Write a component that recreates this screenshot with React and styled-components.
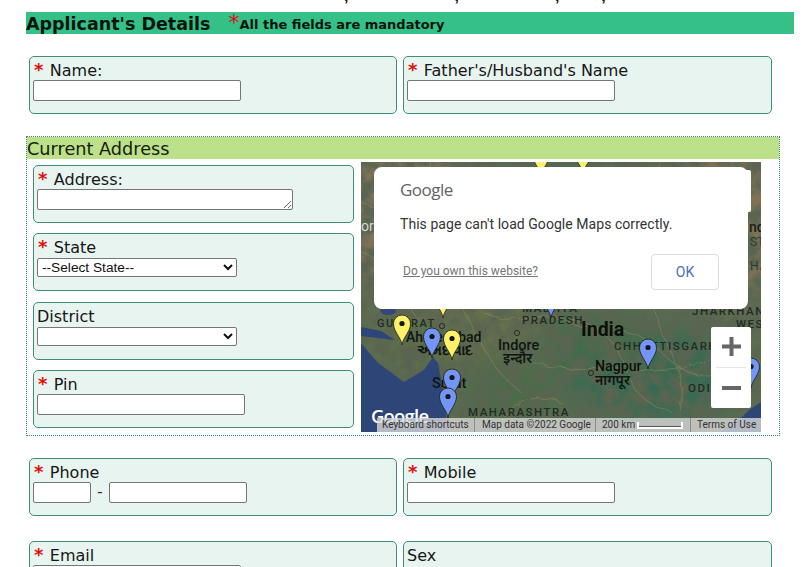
import React from 'react'
import styled, { createGlobalStyle } from 'styled-components'

const Global = createGlobalStyle`
  html, body {
    margin: 0;
    background: #fff;
    overflow: hidden;
  }
  body {
    height: 567px;
    font-family: "DejaVu Sans", Verdana, sans-serif;
    color: #111;
  }
`

const Page = styled.div`
  height: 567px;
  overflow: hidden;
  padding-left: 26px;
  box-sizing: border-box;
`

const CutLine = styled.div`
  height: 12px;
  overflow: hidden;
  display: flex;
  padding-left: 318px;
  font-size: 16px;
  line-height: 16px;
  font-family: "Liberation Sans", sans-serif;
  font-weight: bold;
`

const Comma = styled.span`
  margin-left: ${p => p.$left}px;
  margin-top: -12px;
`

const TitleBar = styled.div`
  box-sizing: border-box;
  width: 768px;
  height: 22px;
  padding-top: 2px;
  background: #35c088;
  display: flex;
  align-items: center;
  font-weight: bold;
  font-size: 17.5px;
  line-height: 20px;
  color: #06140e;
  white-space: nowrap;
`

const TitleStar = styled.span`
  color: #e01010;
  font-weight: normal;
  font-size: 22px;
  margin-left: 18px;
  margin-top: -2px;
`

const TitleNote = styled.span`
  font-size: 13px;
  margin-top: 2px;
`

const Row = styled.div`
  display: grid;
  grid-template-columns: 368px 369px;
  column-gap: 6px;
  margin-left: 3px;
  margin-top: ${p => p.$top}px;
`

const Card = styled.div`
  box-sizing: border-box;
  height: 58px;
  border: 1px solid #3f8f74;
  border-radius: 5px;
  background: #e7f4ef;
  padding: 0 3px;
  font-size: 16px;
`

const Label = styled.div`
  height: 23px;
  line-height: ${p => (p.$plain ? 27 : 25)}px;
  white-space: nowrap;
  color: #161616;
`

const Star = styled.span`
  color: #e01010;
  font-weight: bold;
  font-size: 18px;
  margin-right: 6.4px;
  margin-left: 1px;
`

const TextBox = styled.input`
  box-sizing: border-box;
  display: inline-block;
  width: ${p => p.$w || 208}px;
  height: 21px;
  padding: 0;
  margin: 0;
  border: 1px solid #767676;
  border-radius: 2px;
  background: #fff;
  vertical-align: top;
`

const Dash = styled.span`
  display: inline-block;
  width: 18px;
  text-align: center;
  line-height: 20px;
  vertical-align: top;
  color: #333;
`

const Address = styled.div`
  box-sizing: border-box;
  width: 754px;
  height: 300px;
  margin-top: 22px;
  border: 1px dotted #3a8a6c;
`

const AddressHead = styled.div`
  height: 22px;
  line-height: 24px;
  background: #bde08a;
  font-size: 17.7px;
  color: #14200a;
`

const AddressBody = styled.div`
  display: flex;
  align-items: flex-start;
  padding: 3px 0 0 6px;
  gap: 7px;
`

const Column = styled.div`
  width: 321px;
  margin-top: 3px;
  display: flex;
  flex-direction: column;
  gap: 10.33px;
`

const AreaBox = styled.textarea`
  box-sizing: border-box;
  display: block;
  width: 256px;
  height: 21px;
  margin: 0;
  padding: 0;
  border: 1px solid #767676;
  border-radius: 2px;
  background: #fff;
`

const Dropdown = styled.select`
  display: block;
  box-sizing: border-box;
  width: 200px;
  height: 19px;
  margin: 1px 0 0;
  padding: 0;
  border: 1px solid #767676;
  border-radius: 2px;
  background: #fff;
  font-family: "Liberation Sans", Arial, sans-serif;
  font-size: 13.7px;
  color: #111;
`

const Map = styled.div`
  position: relative;
  flex: none;
  width: 400px;
  height: 270px;
  overflow: hidden;
  font-family: Roboto, sans-serif;
`

const MapPicture = styled.svg`
  display: block;
`

const TopControl = styled.div`
  position: absolute;
  left: 380px;
  top: 8px;
  width: 10px;
  height: 42px;
  background: #fff;
  border-radius: 2px;
`

const Dialog = styled.div`
  position: absolute;
  left: 13px;
  top: 5px;
  box-sizing: border-box;
  width: 374px;
  height: 142px;
  background: #fff;
  border-radius: 8px;
  padding: 11px 26px 0;
`

const DialogLogo = styled.div`
  font-family: "Open Sans", sans-serif;
  font-size: 17px;
  line-height: 23px;
  letter-spacing: -0.5px;
  color: #5f6368;
`

const DialogText = styled.div`
  margin-top: 13px;
  font-size: 14px;
  line-height: 20px;
  letter-spacing: 0.05px;
  color: #333;
`

const DialogFoot = styled.div`
  margin-top: 20px;
  padding: 0 3px;
  display: flex;
  align-items: center;
  justify-content: space-between;
`

const OwnLink = styled.a`
  font-size: 12px;
  margin-top: -2px;
  color: #777;
  text-decoration: underline;
`

const OkButton = styled.button`
  box-sizing: border-box;
  width: 68px;
  height: 36px;
  background: #fff;
  border: 1px solid #dadce0;
  border-radius: 4px;
  font-family: Roboto, sans-serif;
  font-size: 14px;
  color: #4a6fb5;
  padding: 0;
`

const Zoom = styled.div`
  position: absolute;
  left: 350px;
  top: 165px;
  width: 40px;
  height: 81px;
  background: #fff;
  border-radius: 2px;
  display: flex;
  flex-direction: column;
  align-items: center;
`

const ZoomRule = styled.div`
  width: 30px;
  height: 1px;
  background: #e6e6e6;
`

const ZoomHalf = styled.svg`
  display: block;
  flex: none;
`

const MapMark = styled.div`
  position: absolute;
  left: 10px;
  top: 241px;
  font-family: "Open Sans", sans-serif;
  font-size: 18.5px;
  line-height: 26px;
  font-weight: 600;
  letter-spacing: -0.8px;
  color: #fff;
`

const Credits = styled.div`
  position: absolute;
  left: 16px;
  right: 0;
  bottom: 0;
  height: 14px;
  background: rgba(215, 215, 215, 0.8);
  display: flex;
  align-items: center;
  font-size: 10px;
  color: #333;
  white-space: nowrap;
`

const Credit = styled.span`
  box-sizing: border-box;
  width: ${p => p.$w}px;
  padding-left: ${p => p.$inset || 5}px;
  line-height: 14px;
  display: flex;
  align-items: center;
  border-right: ${p => (p.$last ? 'none' : '1px solid #8a8a8a')};
`

const ScaleBar = styled.span`
  box-sizing: border-box;
  display: inline-block;
  width: 46px;
  height: 7px;
  margin-left: 2px;
  border: 2px solid #fff;
  border-top: none;
  box-shadow: inset 0 -1px 0 #555;
`

const PIN = 'M0 0C-1 -8 -8.5 -13 -8.5 -21.5a8.5 8.5 0 1 1 17 0C8.5 -13 1 -8 0 0Z'

const pins = [
  [180, 14, '#fdf06a'],
  [222, 12, '#fdf06a'],
  [82, 156, '#fdf06a'],
  [190, 156, '#7395f5'],
  [390, 226, '#7395f5'],
  [41, 183, '#fdf06a'],
  [71, 196, '#7395f5'],
  [91, 198, '#fdf06a'],
  [91, 237, '#7395f5'],
  [87, 256, '#7395f5'],
  [287, 207, '#7395f5'],
]

const labels = [
  [16, 165, 'GUJARAT', 11, 500, 1.5, '#1f2c24'],
  [45, 180, 'Ahmedabad', 14, 500, 0, '#0e1612'],
  [137, 188, 'Indore', 14.5, 500, 0, '#0e1612'],
  [71, 226, 'Surat', 14.5, 500, 0, '#0e1612'],
  [107, 254, 'MAHARASHTRA', 11.5, 500, 1.5, '#1f2c24'],
  [161, 150, 'MADHYA', 11.5, 500, 1.5, '#1f2c24'],
  [161, 162, 'PRADESH', 11.5, 500, 1.5, '#1f2c24'],
  [220, 174, 'India', 19.5, 700, 0, '#0a0f0a'],
  [253, 188, 'CHHATTISGARH', 11.5, 500, 1.5, '#1f2c24'],
  [234, 209, 'Nagpur', 14.2, 500, 0, '#0a0f0a'],
  [327, 230, 'ODISHA', 11.5, 500, 1.5, '#1f2c24'],
  [375, 166, 'WEST', 11.5, 500, 1.5, '#1f2c24'],
  [331, 153, 'JHARKHAND', 11.5, 500, 1.5, '#1f2c24'],
  [388, 70, 'nd', 14, 500, 0, '#16201a'],
  [389, 84, 'ST', 12, 400, 0, '#2b3a30'],
  [389, 108, 'HA', 12, 400, 1, '#2b3a30'],
  [0, 69, 'or', 14, 400, 0, '#d8d8d0'],
]

const localLabels = [
  [56, 193, 'અમદાવાદ', 14],
  [142, 201, 'इन्दौर', 14],
  [234, 223, 'नागपूर', 14],
]

const lines = [
  'M0 40C40 60 70 30 110 60S150 120 190 150S260 150 300 190S360 210 400 200',
  'M70 0C80 50 60 90 90 130S120 200 160 230',
  'M120 150C170 170 200 140 240 170S250 230 310 250',
  'M300 0C290 50 320 90 300 130S330 190 320 250',
  'M20 110C60 120 100 100 140 120S230 120 280 100S360 90 400 110',
  'M0 90C30 100 40 140 60 160',
  'M170 200C210 210 240 205 290 208S360 190 380 170',
  'M130 270C150 240 170 230 200 240',
]

function MapArt() {
  return (
    <MapPicture width="400" height="270" viewBox="0 0 400 270">
      <defs>
        <filter id="grain" x="0" y="0" width="100%" height="100%">
          <feTurbulence type="fractalNoise" baseFrequency="0.07" numOctaves="4" seed="7" />
          <feColorMatrix values="0 0 0 0 0.1  0 0 0 0 0.13  0 0 0 0 0.08  2.8 0 0 0 -0.85" />
        </filter>
        <filter id="soft"><feGaussianBlur stdDeviation="14" /></filter>
        <filter id="wiggle">
          <feTurbulence type="fractalNoise" baseFrequency="0.08" numOctaves="2" seed="3" />
          <feDisplacementMap in="SourceGraphic" scale="9" />
        </filter>
      </defs>
      <rect width="400" height="270" fill="#5e6c52" />
      <g filter="url(#soft)">
        <ellipse cx="30" cy="50" rx="70" ry="70" fill="#84725a" />
        <ellipse cx="375" cy="50" rx="60" ry="80" fill="#827254" />
        <ellipse cx="180" cy="30" rx="60" ry="35" fill="#4a6d54" />
        <ellipse cx="290" cy="215" rx="90" ry="50" fill="#376a52" />
        <ellipse cx="150" cy="230" rx="45" ry="40" fill="#486c4a" />
        <ellipse cx="60" cy="190" rx="50" ry="22" fill="#5c7046" />
        <ellipse cx="120" cy="170" rx="50" ry="25" fill="#67724c" />
        <ellipse cx="240" cy="180" rx="60" ry="30" fill="#436a4c" />
      </g>
      <rect width="400" height="270" filter="url(#grain)" />
      <g fill="none" stroke="#a8965a" strokeWidth="0.7" opacity="0.6" filter="url(#wiggle)">
        {lines.map(d => <path key={d} d={d} />)}
      </g>
      <path d="M0 181L17 201L43 220L63 208L72 195L77 201L80 218L83 238L87 270L0 270Z" fill="#2d4677" />
      <path d="M0 165L20 169L34 178L17 176L0 174Z" fill="#2d4677" />
      <ellipse cx="27" cy="149" rx="8" ry="4" fill="#34497a" />
      <path d="M359 270L380 256L388 248L400 240L400 270Z" fill="#2d4677" />
      {[[81, 164], [156, 171], [230, 211]].map(([x, y]) => (
        <circle key={x} cx={x} cy={y} r="2.6" fill="none" stroke="#222" strokeWidth="0.9" />
      ))}
      {labels.map(([x, y, t, s, w, ls, c]) => (
        <text key={t} x={x} y={y} fontSize={s} fontWeight={w} letterSpacing={ls} fill={c} fontFamily="Roboto, sans-serif">{t}</text>
      ))}
      {localLabels.map(([x, y, t, s]) => (
        <text key={t} x={x} y={y} fontSize={s} fontWeight="600" fill="#0e1612" fontFamily="'Noto Sans', sans-serif">{t}</text>
      ))}
      {pins.map(([x, y, c], i) => (
        <g key={i} transform={`translate(${x} ${y})`}>
          <path d={PIN} fill={c} stroke="#1c1c10" strokeWidth="0.8" />
          <circle cy="-21.5" r="2.6" fill="#15151a" />
        </g>
      ))}
    </MapPicture>
  )
}

function Field({ label, required, children }) {
  return (
    <Card>
      <Label $plain={!required}>{required && <Star>*</Star>}{label}</Label>
      {children}
    </Card>
  )
}

export default function App() {
  return (
    <Page>
      <Global />
      <CutLine>
        <Comma $left={0}>,</Comma>
        <Comma $left={106}>,</Comma>
        <Comma $left={96}>,</Comma>
        <Comma $left={42}>,</Comma>
      </CutLine>
      <TitleBar>
        Applicant's Details
        <TitleStar>*</TitleStar>
        <TitleNote>All the fields are mandatory</TitleNote>
      </TitleBar>

      <Row $top={22}>
        <Field label="Name:" required><TextBox /></Field>
        <Field label="Father's/Husband's Name" required><TextBox /></Field>
      </Row>

      <Address>
        <AddressHead>Current Address</AddressHead>
        <AddressBody>
          <Column>
            <Field label="Address:" required><AreaBox /></Field>
            <Field label="State" required>
              <Dropdown defaultValue=""><option value="">--Select State--</option></Dropdown>
            </Field>
            <Field label="District">
              <Dropdown defaultValue=""><option value=""></option></Dropdown>
            </Field>
            <Field label="Pin" required><TextBox /></Field>
          </Column>
          <Map>
            <MapArt />
            <MapMark>Google</MapMark>
            <Credits>
              <Credit $w={98}>Keyboard shortcuts</Credit>
              <Credit $w={121} $inset={7}>Map data ©2022 Google</Credit>
              <Credit $w={95} $inset={6}>200 km<ScaleBar /></Credit>
              <Credit $w={70} $inset={6} $last>Terms of Use</Credit>
            </Credits>
            <Zoom>
              <ZoomHalf width="40" height="40" viewBox="0 0 40 40">
                <path d="M11 17.5h7.5V10h4v7.5H30v4h-7.5V29h-4v-7.5H11Z" fill="#666" />
              </ZoomHalf>
              <ZoomRule />
              <ZoomHalf width="40" height="40" viewBox="0 0 40 40">
                <path d="M11 18h19v4H11Z" fill="#666" />
              </ZoomHalf>
            </Zoom>
            <TopControl />
            <Dialog>
              <DialogLogo>Google</DialogLogo>
              <DialogText>This page can't load Google Maps correctly.</DialogText>
              <DialogFoot>
                <OwnLink>Do you own this website?</OwnLink>
                <OkButton>OK</OkButton>
              </DialogFoot>
            </Dialog>
          </Map>
        </AddressBody>
      </Address>

      <Row $top={22}>
        <Field label="Phone" required>
          <TextBox $w={58} /><Dash>-</Dash><TextBox $w={138} />
        </Field>
        <Field label="Mobile" required><TextBox /></Field>
      </Row>

      <Row $top={25}>
        <Field label="Email" required><TextBox /></Field>
        <Field label="Sex" />
      </Row>
    </Page>
  )
}
